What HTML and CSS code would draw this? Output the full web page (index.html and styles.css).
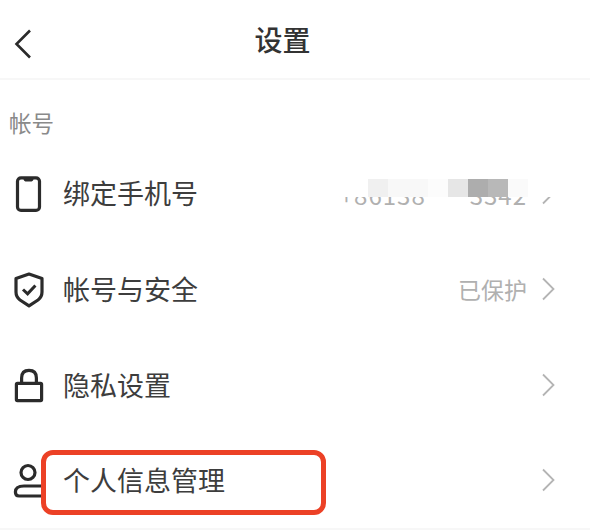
FILE: index.html
```html
<!DOCTYPE html>
<html lang="zh-CN">
  <head>
    <meta charset="UTF-8" />
    <meta name="viewport" content="width=device-width, initial-scale=1.0" />
    <title>设置</title>
    <link rel="stylesheet" href="styles.css">
  </head>
  <body>
    <header class="top-bar">
      <svg class="back" width="18" height="30" viewBox="0 0 18 30">
        <path d="M16 1.5 L2.5 15 L16 28.5" fill="none" stroke="#2b2b2b" stroke-width="2.6" />
      </svg>
      <h1>设置</h1>
    </header>

    <p class="section-title">帐号</p>

    <div class="row">
      <svg class="icon" width="32" height="36" viewBox="0 0 32 36">
        <rect x="4.5" y="1.8" width="22" height="32.6" rx="3.5" fill="none" stroke="#2b2b2b" stroke-width="3.2" />
        <path d="M10 2 H21 L20 4.6 Q19.6 5.4 18.6 5.4 H12.4 Q11.4 5.4 11 4.6 Z" fill="#2b2b2b" />
      </svg>
      <span class="row-name">绑定手机号</span>
      <span class="row-value phone">+86138<span class="phone-gap"></span>3342</span>
      <svg class="arrow" width="14" height="24" viewBox="0 0 14 24">
        <path d="M2 1.5 L12.5 12 L2 22.5" fill="none" stroke="#b4b4b4" stroke-width="1.8" />
      </svg>
      <div class="mask">
        <i class="cell c1"></i><i class="cell c2"></i><i class="cell c3"></i><i class="cell c4"></i>
        <i class="cell c5"></i><i class="cell c6"></i><i class="cell c7"></i><i class="cell c8"></i>
      </div>
    </div>

    <div class="row">
      <svg class="icon" width="32" height="36" viewBox="0 0 32 36">
        <path d="M16 2 L29 6.5 V20 Q29 25 25 28 L16 33.8 L7 28 Q3 25 3 20 V6.5 Z" fill="none" stroke="#2b2b2b" stroke-width="3.2" stroke-linejoin="round" />
        <path d="M10 17.5 L14.6 21.8 L22.4 13.4" fill="none" stroke="#2b2b2b" stroke-width="3" />
      </svg>
      <span class="row-name">帐号与安全</span>
      <span class="row-value">已保护</span>
      <svg class="arrow" width="14" height="24" viewBox="0 0 14 24">
        <path d="M2 1.5 L12.5 12 L2 22.5" fill="none" stroke="#b4b4b4" stroke-width="1.8" />
      </svg>
    </div>

    <div class="row">
      <svg class="icon" width="32" height="36" viewBox="0 0 32 36">
        <rect x="3.4" y="15.4" width="25.2" height="17.2" rx="1" fill="none" stroke="#2b2b2b" stroke-width="3.2" />
        <path d="M8.6 15 V10 Q8.6 2.4 16 2.4 Q23.4 2.4 23.4 10 V15" fill="none" stroke="#2b2b2b" stroke-width="3.2" />
      </svg>
      <span class="row-name">隐私设置</span>
      <span class="row-value"></span>
      <svg class="arrow" width="14" height="24" viewBox="0 0 14 24">
        <path d="M2 1.5 L12.5 12 L2 22.5" fill="none" stroke="#b4b4b4" stroke-width="1.8" />
      </svg>
    </div>

    <div class="row">
      <svg class="icon" width="32" height="36" viewBox="0 0 32 36">
        <circle cx="15" cy="9.5" r="7" fill="none" stroke="#2b2b2b" stroke-width="3.2" />
        <path d="M30 23 H11 Q2.4 23 2.4 29 Q2.4 33 6 33 H30" fill="none" stroke="#2b2b2b" stroke-width="3.2" />
      </svg>
      <span class="row-name">个人信息管理</span>
      <span class="row-value"></span>
      <svg class="arrow" width="14" height="24" viewBox="0 0 14 24">
        <path d="M2 1.5 L12.5 12 L2 22.5" fill="none" stroke="#b4b4b4" stroke-width="1.8" />
      </svg>
      <div class="highlight"></div>
    </div>
  </body>
</html>
```

FILE: styles.css
```css
* {
  margin: 0;
  padding: 0;
  box-sizing: border-box;
}

body {
  background-color: #fff;
  font-family: "Noto Sans CJK SC", "Noto Sans", sans-serif;
  color: #3a3a3a;
  overflow: hidden;
}

.top-bar {
  position: relative;
  height: 80px;
  display: flex;
  justify-content: center;
  align-items: center;
  border-bottom: 2px solid #f7f7f7;
}

.top-bar h1 {
  font-size: 28px;
  font-weight: 500;
  color: #333;
  margin-right: 25px;
}

.back {
  position: absolute;
  left: 14px;
  top: 29px;
}

.section-title {
  height: 66px;
  padding: 26px 0 0 9px;
  font-size: 22.5px;
  line-height: 32px;
  color: #8a8a8a;
}

.row {
  position: relative;
  height: 96px;
  display: flex;
  align-items: center;
  padding: 0 35px 0 13px;
}

.row:last-child {
  border-bottom: 2px solid #f7f7f7;
}

.icon {
  flex-shrink: 0;
  margin-right: 18px;
}

.row-name {
  flex: 1;
  font-size: 27px;
  color: #3d3d3d;
  margin-bottom: 4px;
}

.row-value {
  font-size: 23px;
  color: #b0b0b0;
  margin-right: 14px;
  margin-bottom: 3px;
}

.phone {
  display: flex;
  align-items: center;
  font-size: 24px;
  letter-spacing: 1px;
  margin-top: 0;
  margin-bottom: 0;
}

.phone-gap {
  width: 44px;
}

.arrow {
  flex-shrink: 0;
  margin-bottom: 2px;
}

.mask {
  position: absolute;
  left: 340px;
  top: 26px;
  width: 230px;
  height: 25px;
  background-color: #fff;
  display: flex;
  align-items: flex-end;
  padding-left: 28px;
}

.cell {
  display: block;
  width: 20px;
  height: 18px;
}

.c1 { background-color: #f0f0f0; }
.c2 { background-color: #f8f8f8; }
.c3 { background-color: #f8f8f8; }
.c4 { background-color: #fcfcfc; }
.c5 { background-color: #e6e6e6; }
.c6 { background-color: #adadad; }
.c7 { background-color: #b8b8b8; }
.c8 { background-color: #fafafa; }

.highlight {
  position: absolute;
  left: 41px;
  top: 16px;
  width: 285px;
  height: 65px;
  border: 5px solid #ec4126;
  border-radius: 12px;
}
```
